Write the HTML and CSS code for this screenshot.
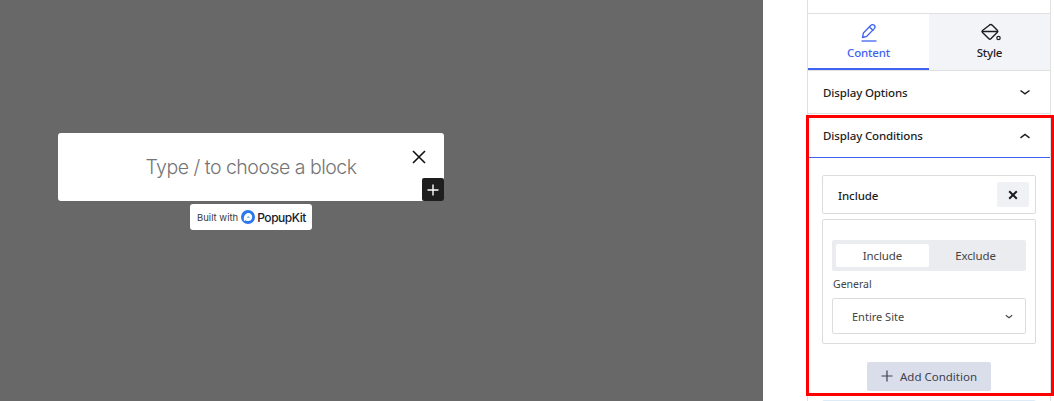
FILE: index.html

```html
<!DOCTYPE html>
<html lang="en">

<head>
  <meta charset="UTF-8">
  <title>PopupKit</title>
  <link rel="stylesheet" href="styles.css">
</head>

<body>
  <div class="canvas">
    <div class="popup">
      <div class="popup-box">
        <span class="placeholder">Type / to choose a block</span>
        <svg class="popup-close" width="14" height="14" viewBox="0 0 14 14">
          <path d="M1 1l12 12M13 1L1 13" stroke="#111" stroke-width="1.6" fill="none" />
        </svg>
        <div class="popup-add">
          <svg width="12" height="12" viewBox="0 0 12 12">
            <path d="M6 .5v11M.5 6h11" stroke="#fff" stroke-width="1.4" fill="none" />
          </svg>
        </div>
      </div>
      <div class="built-with">
        <span class="built-label">Built with</span>
        <svg width="14" height="14" viewBox="0 0 14 14">
          <circle cx="7" cy="7" r="7" fill="#2b78ee" />
          <path d="M2.800 8.200C3 5.300 5 3 7.400 3c2.200 0 3.800 1.800 3.800 4 0 2.300-1.700 4.100-4 4.100-1 0-2-.3-2.800-.9L3 11.200z" fill="#fff" />
          <path d="M5.200 8.400L7.300 5.800l2 2.600c-1.200-.6-2.800-.6-4.100 0z" fill="#8db9f6" />
        </svg>
        <span class="built-brand">PopupKit</span>
      </div>
    </div>
  </div>

  <div class="sidebar">
    <div class="panel">
      <div class="panel-top"></div>
      <div class="tabs">
        <div class="tab tab-active">
          <svg width="24" height="20" viewBox="0 0 24 20">
            <path d="M5.500 15.500l.9-4.500 7.500-7.700c1-1 2.500-1 3.400-.1.900.9.900 2.400 0 3.400l-7.500 7.700z" fill="none" stroke="#3f63f0" stroke-width="1.300" stroke-linejoin="round" />
            <path d="M12.500 5l3.800 3.700" fill="none" stroke="#3f63f0" stroke-width="1.300" />
            <path d="M4.500 19h15" fill="none" stroke="#3f63f0" stroke-width="1.300" />
          </svg>
          <span>Content</span>
        </div>
        <div class="tab">
          <svg width="24" height="20" viewBox="0 0 24 20">
            <path d="M11 3.500c1.200-1.200 2.500-1 3.300-.2l5 5c.8.800.7 1.300.1 1.900l-6.600 6.600c-.6.600-1.300.6-1.900 0l-6.400-6.400c-.6-.6-.6-1.300 0-1.900z" fill="none" stroke="#1e1e1e" stroke-width="1.400" stroke-linejoin="round" />
            <path d="M3.800 9.500h16" fill="none" stroke="#1e1e1e" stroke-width="1.500" />
            <circle cx="20.500" cy="16" r="1.700" fill="none" stroke="#1e1e1e" stroke-width="1.200" />
          </svg>
          <span>Style</span>
        </div>
      </div>

      <div class="section-head section-closed">
        <span>Display Options</span>
        <svg width="12" height="8" viewBox="0 0 12 8">
          <path d="M1.500 2.500L6 5.800l4.500-3.300" fill="none" stroke="#1e1e1e" stroke-width="1.500" />
        </svg>
      </div>

      <div class="section-head section-open">
        <span>Display Conditions</span>
        <svg width="12" height="8" viewBox="0 0 12 8">
          <path d="M1.500 5.800L6 2.500l4.500 3.300" fill="none" stroke="#1e1e1e" stroke-width="1.500" />
        </svg>
      </div>

      <div class="section-body">
        <div class="rule-head">
          <span>Include</span>
          <div class="rule-remove">
            <svg width="10" height="10" viewBox="0 0 10 10">
              <path d="M1.200 1.200l7.600 7.600M8.800 1.200L1.200 8.800" stroke="#1e1e1e" stroke-width="2" fill="none" />
            </svg>
          </div>
        </div>
        <div class="rule-body">
          <div class="segment">
            <div class="segment-item segment-on">Include</div>
            <div class="segment-item">Exclude</div>
          </div>
          <div class="field-label">General</div>
          <div class="select">
            <span>Entire Site</span>
            <svg width="8" height="5" viewBox="0 0 8 5">
              <path d="M.8 1.300L4 3.800l3.200-2.500" fill="none" stroke="#444" stroke-width="1.100" />
            </svg>
          </div>
        </div>
        <div class="add-row">
          <div class="add-btn">
            <svg width="12" height="12" viewBox="0 0 12 12">
              <path d="M6 .5v11M.5 6h11" stroke="#3c4150" stroke-width="1.200" fill="none" />
            </svg>
            <span>Add Condition</span>
          </div>
        </div>
        <div class="next-rule"></div>
      </div>
    </div>
    <div class="highlight"></div>
  </div>
</body>

</html>
```

FILE: styles.css

```css
* {
  box-sizing: border-box;
}

html,
body {
  height: 100%;
}

body {
  margin: 0;
  display: flex;
  overflow: hidden;
  background: #fff;
  font-family: "Noto Sans", sans-serif;
  color: #1e1e1e;
}

.canvas {
  flex: 0 0 763px;
  background: #686868;
  padding: 133px 0 0 58px;
}

.popup {
  width: 386px;
  display: flex;
  flex-direction: column;
  align-items: center;
}

.popup-box {
  position: relative;
  width: 100%;
  height: 68px;
  background: #fff;
  border-radius: 3px;
  display: flex;
  align-items: center;
  justify-content: center;
}

.placeholder {
  font-family: Inter, sans-serif;
  font-weight: 300;
  font-size: 19.5px;
  letter-spacing: -0.5px;
  color: #757575;
}

.popup-close {
  position: absolute;
  top: 17px;
  right: 18px;
}

.popup-add {
  position: absolute;
  right: 0;
  bottom: 0;
  width: 22px;
  height: 23px;
  background: #1e1e1e;
  border-radius: 2px;
  display: flex;
  align-items: center;
  justify-content: center;
}

.built-with {
  margin-top: 3px;
  width: 122px;
  height: 26px;
  background: #fff;
  border-radius: 3px;
  display: flex;
  align-items: center;
  padding-left: 7px;
  gap: 2px;
}

.built-label {
  font-family: Inter, sans-serif;
  font-size: 9.5px;
  color: #3a3a3a;
  margin-right: 1px;
}

.built-brand {
  font-family: Inter, sans-serif;
  font-size: 12px;
  font-weight: 500;
  letter-spacing: -0.45px;
  color: #16202e;
}

.sidebar {
  position: relative;
  flex: 1;
  padding: 0 3px 0 44px;
}

.panel {
  height: 100%;
  border-left: 1px solid #e0e0e0;
  border-right: 1px solid #e0e0e0;
}

.panel-top {
  height: 14px;
  border-bottom: 1px solid #e0e0e0;
}

.tabs {
  display: flex;
  height: 57px;
  border-bottom: 1px solid #e0e0e0;
}

.tab {
  flex: 1;
  display: flex;
  flex-direction: column;
  align-items: center;
  padding-top: 8px;
  background: #f3f4f8;
  font-size: 11.5px;
  font-weight: 500;
  letter-spacing: -0.2px;
  line-height: 17px;
}

.tab svg {
  margin-bottom: 2px;
}

.tab-active {
  background: #fff;
  color: #3f63f0;
  border-bottom: 2px solid #3f63f0;
}

.section-head {
  display: flex;
  align-items: center;
  justify-content: space-between;
  padding: 0 19px 0 15px;
  font-size: 11.5px;
  font-weight: 500;
  letter-spacing: -0.13px;
}

.section-closed {
  height: 43px;
  border-bottom: 1px solid #e0e0e0;
}

.section-open {
  height: 44px;
  border-bottom: 1px solid #3f63f0;
}

.section-body {
  padding: 17px 14px 0;
}

.rule-head {
  height: 39px;
  border: 1px solid #dcdcdc;
  border-radius: 2px;
  display: flex;
  align-items: center;
  justify-content: space-between;
  padding: 1px 6px 0 15px;
  font-size: 11.5px;
  font-weight: 500;
  letter-spacing: -0.1px;
}

.rule-remove {
  width: 32px;
  height: 25px;
  margin-top: -1px;
  background: #f0f1f5;
  border-radius: 2px;
  display: flex;
  align-items: center;
  justify-content: center;
}

.rule-body {
  margin-top: 5px;
  height: 125px;
  border: 1px solid #dcdcdc;
  border-radius: 2px;
  padding: 20px 9px 0;
}

.segment {
  height: 31px;
  padding: 4px;
  background: #ebecf0;
  border-radius: 2px;
  display: flex;
  font-size: 11.5px;
  letter-spacing: -0.1px;
  color: #444;
}

.segment-item {
  flex: 1;
  display: flex;
  align-items: center;
  justify-content: center;
}

.segment-on {
  background: #fff;
  border-radius: 2px;
}

.field-label {
  margin-top: 6px;
  padding-left: 1px;
  font-size: 10.5px;
  line-height: 15px;
  color: #444;
}

.select {
  margin-top: 6px;
  height: 36px;
  border: 1px solid #dcdcdc;
  border-radius: 2px;
  display: flex;
  align-items: center;
  justify-content: space-between;
  padding: 0 12px 0 19px;
  font-size: 11px;
  color: #444;
}

.add-row {
  margin-top: 18px;
  display: flex;
  justify-content: center;
}

.add-btn {
  width: 124px;
  height: 29px;
  padding-bottom: 1px;
  background: #d9deea;
  border-radius: 2px;
  display: flex;
  align-items: center;
  justify-content: center;
  gap: 7px;
  font-size: 11.5px;
  color: #3c4150;
}

.next-rule {
  margin-top: 9px;
  height: 10px;
  border: 1px solid #dcebf5;
  border-radius: 2px;
}

.highlight {
  position: absolute;
  left: 43px;
  top: 115px;
  width: 248px;
  height: 281px;
  border: 3px solid #f00;
}
```
